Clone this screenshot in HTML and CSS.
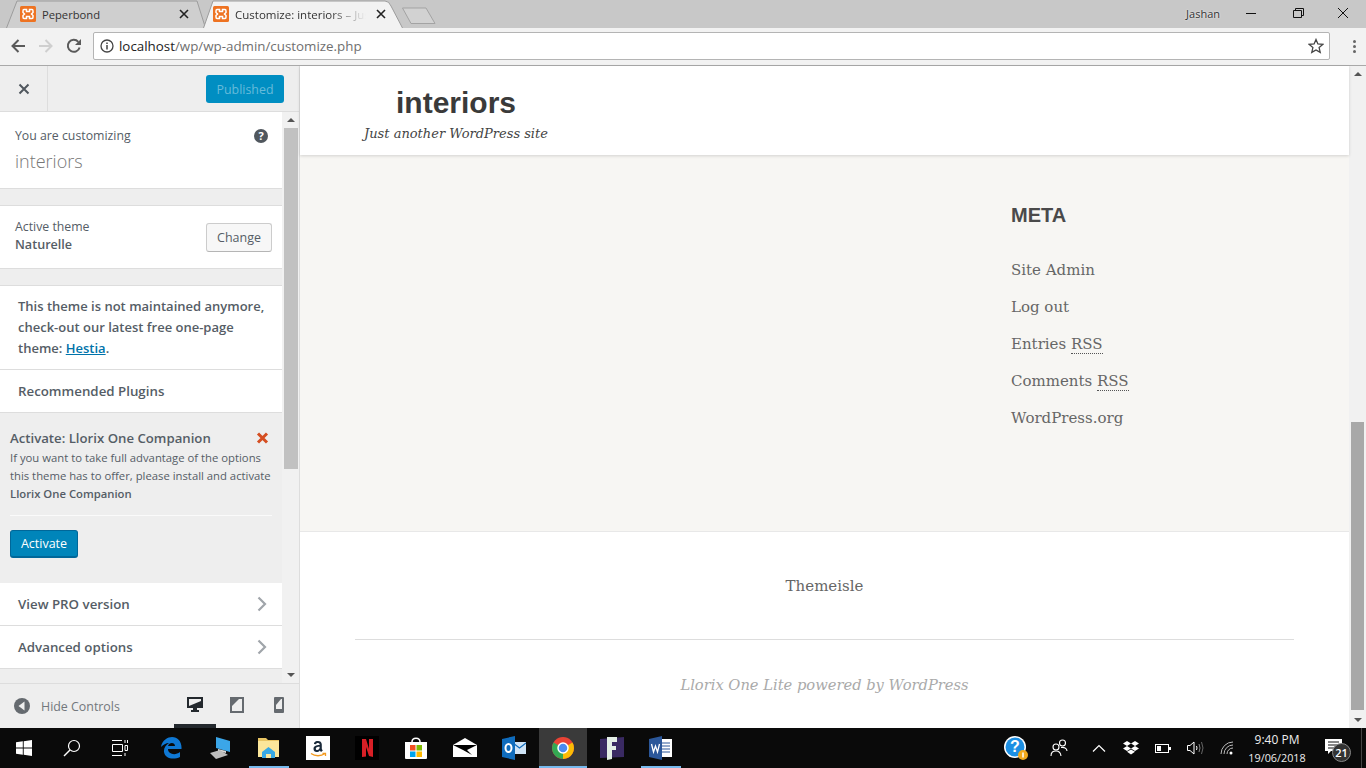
FILE: index.html
```html
<!DOCTYPE html>
<html lang="en">
<head>
    <meta charset="UTF-8">
    <title>Customize: interiors</title>
    <link rel="stylesheet" href="styles.css">
</head>
<body>
    <div class="tabstrip">
        <div class="tab">
            <svg class="tab-shape" width="200" height="28" viewBox="0 0 200 28"><path d="M0.5 28 L11 1 H191 L199.500 28" fill="#cfcfcf" stroke="#9c9c9c"/></svg>
            <svg class="favicon" width="16" height="16" viewBox="0 0 16 16"><rect width="16" height="16" rx="1.500" fill="#ee7322"/><path d="M4 3.500 H6.500 V5.500 H9.500 V3.500 H12 Q13 3.500 13 5 V6.500 L11.500 8 L13 9.500 V11 Q13 12.500 12 12.500 H9.500 V10.500 H6.500 V12.500 H4 Q3 12.500 3 11 V9.500 L4.500 8 L3 6.500 V5 Q3 3.500 4 3.500 Z" fill="none" stroke="#fff" stroke-width="1.500"/></svg>
            <span class="tab-title">Peperbond</span>
            <svg class="tab-close" width="10" height="10" viewBox="0 0 10 10"><path d="M1 1 L9 9 M9 1 L1 9" stroke="#222" stroke-width="1.600"/></svg>
        </div>
        <div class="tab tab-active">
            <svg class="tab-shape" width="200" height="28" viewBox="0 0 200 28"><path d="M0.500 28 L10 1 H182 Q186 1 188 6 L199.500 28" fill="#f2f2f2" stroke="#9c9c9c"/></svg>
            <svg class="favicon" width="16" height="16" viewBox="0 0 16 16"><rect width="16" height="16" rx="1.500" fill="#ee7322"/><path d="M4 3.500 H6.500 V5.500 H9.500 V3.500 H12 Q13 3.500 13 5 V6.500 L11.500 8 L13 9.500 V11 Q13 12.500 12 12.500 H9.500 V10.500 H6.500 V12.500 H4 Q3 12.500 3 11 V9.500 L4.500 8 L3 6.500 V5 Q3 3.500 4 3.500 Z" fill="none" stroke="#fff" stroke-width="1.500"/></svg>
            <span class="tab-title tab-fade">Customize: interiors – Jus</span>
            <svg class="tab-close" width="10" height="10" viewBox="0 0 10 10"><path d="M1 1 L9 9 M9 1 L1 9" stroke="#222" stroke-width="1.600"/></svg>
        </div>
        <svg class="newtab" width="36" height="20" viewBox="0 0 36 20"><path d="M1.500 2 H25 L34 17.500 H10 Z" fill="#d2d2d2" stroke="#a3a3a3" stroke-linejoin="round"/></svg>
        <div class="window-controls">
            <span class="user">Jashan</span>
            <svg class="win-btn" width="46" height="14" viewBox="0 0 46 14"><path d="M18 7.500 H28" stroke="#111"/></svg>
            <svg class="win-btn" width="46" height="14" viewBox="0 0 46 14"><path d="M19.500 4.500 H27.500 V11.500 H19.500 Z M21.500 4.500 V2.500 H29.500 V9.500 H27.500" fill="none" stroke="#111"/></svg>
            <svg class="win-btn" width="46" height="14" viewBox="0 0 46 14"><path d="M18 2 L28 12 M28 2 L18 12" stroke="#111"/></svg>
        </div>
    </div>

    <div class="toolbar">
        <svg class="nav-icon" width="16" height="16" viewBox="0 0 16 16"><path d="M15 8 H2.500 M8.500 2 L2.500 8 L8.500 14" fill="none" stroke="#5a5a5a" stroke-width="2"/></svg>
        <svg class="nav-icon" width="16" height="16" viewBox="0 0 16 16"><path d="M1 8 H13.500 M7.500 2 L13.500 8 L7.500 14" fill="none" stroke="#cfcfcf" stroke-width="2"/></svg>
        <svg class="nav-icon" width="16" height="16" viewBox="0 0 16 16"><path d="M13.600 9.500 A6 6 0 1 1 12.300 3.800" fill="none" stroke="#5a5a5a" stroke-width="2"/><path d="M15 1 V7 H9 Z" fill="#5a5a5a"/></svg>
        <div class="omnibox">
            <svg width="14" height="14" viewBox="0 0 14 14"><circle cx="7" cy="7" r="6" fill="none" stroke="#444" stroke-width="1.300"/><path d="M7 6 V10.500 M7 3.500 V5" stroke="#444" stroke-width="1.500"/></svg>
            <span class="url"><b>localhost</b>/wp/wp-admin/customize.php</span>
            <svg class="star" width="16" height="16" viewBox="0 0 16 16"><path d="M8 1.500 L9.900 6 L14.800 6.400 L11.100 9.600 L12.200 14.400 L8 11.900 L3.800 14.400 L4.900 9.600 L1.200 6.400 L6.100 6 Z" fill="none" stroke="#444" stroke-width="1.300"/></svg>
        </div>
        <div class="menu-dots"><i></i><i></i><i></i></div>
    </div>

    <div class="workspace">
        <aside class="sidebar">
            <div class="side-header">
                <div class="side-close">
                    <svg width="12" height="12" viewBox="0 0 12 12"><path d="M1.500 1.500 L10.500 10.500 M10.500 1.500 L1.500 10.500" stroke="#50575e" stroke-width="2"/></svg>
                </div>
                <div class="publish-btn">Published</div>
            </div>
            <div class="side-middle">
                <div class="side-scroll">
                    <section class="info-block">
                        <div class="info-top">
                            <span class="muted">You are customizing</span>
                            <span class="help">?</span>
                        </div>
                        <div class="site-name">interiors</div>
                    </section>
                    <section class="theme-block">
                        <div>
                            <div class="muted">Active theme</div>
                            <div class="theme-name">Naturelle</div>
                        </div>
                        <div class="change-btn">Change</div>
                    </section>
                    <section class="maintained">This theme is not maintained anymore, check-out our latest free one-page theme: <a href="#">Hestia</a>.</section>
                    <div class="row row-plain">Recommended Plugins</div>
                    <section class="plugin-notice">
                        <div class="plugin-head">
                            <span>Activate: Llorix One Companion</span>
                            <svg width="13" height="12" viewBox="0 0 13 12"><path d="M2 1.500 L11 10.500 M11 1.500 L2 10.500" stroke="#d54e21" stroke-width="3"/></svg>
                        </div>
                        <p class="plugin-text">If you want to take full advantage of the options this theme has to offer, please install and activate <b>Llorix One Companion</b></p>
                        <hr class="plugin-rule">
                        <div class="activate-btn">Activate</div>
                    </section>
                    <div class="row">View PRO version
                        <svg width="10" height="16" viewBox="0 0 10 16"><path d="M1.500 1.500 L8 8 L1.500 14.500" fill="none" stroke="#a0a5aa" stroke-width="2.200"/></svg>
                    </div>
                    <div class="row">Advanced options
                        <svg width="10" height="16" viewBox="0 0 10 16"><path d="M1.500 1.500 L8 8 L1.500 14.500" fill="none" stroke="#a0a5aa" stroke-width="2.200"/></svg>
                    </div>
                </div>
                <div class="side-scrollbar">
                    <span class="arrow-up"></span>
                    <div class="track"><div class="thumb"></div></div>
                    <span class="arrow-down"></span>
                </div>
            </div>
            <div class="side-footer">
                <svg width="16" height="16" viewBox="0 0 16 16"><circle cx="8" cy="8" r="8" fill="#656a6f"/><path d="M10.500 3.500 V12.500 L4.500 8 Z" fill="#eee"/></svg>
                <span class="hide-label">Hide Controls</span>
                <div class="devices">
                    <div class="device device-on">
                        <svg width="16" height="15" viewBox="0 0 16 15"><path d="M0 0 H16 V11 H10 V13 H12 V15 H4 V13 H6 V11 H0 Z" fill="#23282d"/><path d="M2 2 H14 V4 L2 9 Z" fill="#eee"/></svg>
                    </div>
                    <div class="device">
                        <svg width="14" height="16" viewBox="0 0 14 16"><rect x="1" y="1" width="12" height="14" fill="none" stroke="#656a6f" stroke-width="2"/><path d="M2 2 H9 L2 9 Z" fill="#656a6f"/></svg>
                    </div>
                    <div class="device device-last">
                        <svg width="10" height="16" viewBox="0 0 10 16"><rect width="10" height="16" rx="1" fill="#656a6f"/><path d="M2 2 H8 V12 H2 Z" fill="#eee"/><path d="M2 2 H7 L2 8 Z" fill="#656a6f"/></svg>
                    </div>
                </div>
            </div>
        </aside>

        <main class="preview">
            <div class="page">
                <header class="site-header">
                    <div class="brand">
                        <div class="site-title">interiors</div>
                        <div class="tagline">Just another WordPress site</div>
                    </div>
                </header>
                <div class="widgets">
                    <div class="meta">
                        <h3>META</h3>
                        <ul>
                            <li>Site Admin</li>
                            <li>Log out</li>
                            <li>Entries <abbr>RSS</abbr></li>
                            <li>Comments <abbr>RSS</abbr></li>
                            <li>WordPress.org</li>
                        </ul>
                    </div>
                </div>
                <footer class="site-footer">
                    <div class="footer-menu">Themeisle</div>
                    <div class="powered">Llorix One Lite powered by WordPress</div>
                </footer>
            </div>
            <div class="page-scrollbar">
                <span class="arrow-up"></span>
                <div class="track"><div class="thumb"></div></div>
                <span class="arrow-down"></span>
            </div>
        </main>
    </div>

    <div class="taskbar">
        <div class="task-group">
            <div class="task">
                <svg width="16" height="16" viewBox="0 0 16 16"><path d="M0 2.300 L6.800 1.300 V7.500 H0 Z M7.700 1.200 L16 0 V7.500 H7.700 Z M0 8.500 H6.800 V14.700 L0 13.700 Z M7.700 8.500 H16 V16 L7.700 14.800 Z" fill="#fff"/></svg>
            </div>
            <div class="task">
                <svg width="18" height="18" viewBox="0 0 18 18"><circle cx="11" cy="7" r="5.500" fill="none" stroke="#fff" stroke-width="1.200"/><path d="M7 11 L1 17" stroke="#fff" stroke-width="1.400"/></svg>
            </div>
            <div class="task">
                <svg width="16" height="16" viewBox="0 0 16 16"><path d="M0 .5 H10 M0 15.500 H10 M0.500 4.500 H10.500 V11.500 H0.500 Z M13 0 V3 M15.500 0 V3 M13 5.500 H15.500 V10.500 H13 Z M13 13 V16" fill="none" stroke="#fff"/></svg>
            </div>
        </div>
        <div class="task-group pinned">
            <div class="task">
                <svg width="22" height="22" viewBox="0 0 22 22"><path d="M1 10 C2 3 8 0 12 0 C18 0 22 5 21.500 12 H8 C8 17 15 19 20 15 V20 C14 23 5 22 4 15 C3.500 11 6 8 9 6 C6 6 3 8 1 10 Z M8 9 H15 C15 5 9 5 8 9 Z" fill="#0f78d4"/></svg>
            </div>
            <div class="task">
                <svg width="24" height="22" viewBox="0 0 24 22"><path d="M8 0 L22 4 V15 L8 11 Z" fill="#3ba6e8"/><path d="M10 12 L18 14 V16 L10 14 Z" fill="#d8d8d8"/><path d="M2 16 L12 13 L20 18 L8 22 Z" fill="#bdbdbd"/></svg>
            </div>
            <div class="task task-open">
                <svg width="22" height="20" viewBox="0 0 22 20"><path d="M0 0 H8 L10 2 H21 V19 H0 Z" fill="#e9c564"/><path d="M0 3 H21 V19 H0 Z" fill="#fbe69a"/><path d="M4 20 V14 L10.500 9 L17 14 V20 Z" fill="#38a9e4"/><path d="M8 20 V16 H13 V20 Z" fill="#fbe69a"/></svg>
            </div>
            <div class="task">
                <svg width="24" height="24" viewBox="0 0 24 24"><rect width="24" height="24" fill="#fff"/><path d="M12 5 C8.500 5 8 7 8 8 L10 8.300 C10.200 7.300 11 7 12 7 C13.500 7 13.700 8 13.700 9 C10 9 7.500 10 7.500 13 C7.500 15 9 16 10.500 16 C12 16 13 15.500 13.800 14.500 L15 16 L16.800 14.500 C16 13.500 15.800 13 15.800 12 V8.500 C15.800 6 14 5 12 5 Z M13.700 11 C13.700 13 12.500 14 11.300 14 C10.300 14 9.800 13.500 9.800 12.700 C9.800 11.300 11.300 10.800 13.700 10.800 Z" fill="#1b2a3a"/><path d="M5 17.500 C9 20.500 15 20.500 19 17.500 M16.500 17.500 H19.500 V20" fill="none" stroke="#f39a1f" stroke-width="1.300"/></svg>
            </div>
            <div class="task">
                <svg width="24" height="24" viewBox="0 0 24 24"><rect width="24" height="24" fill="#000"/><path d="M7 3 H11 L14 13 V3 H18 V21 L14 20 L11 11 V20.500 L7 21 Z" fill="#d81f26"/></svg>
            </div>
            <div class="task">
                <svg width="24" height="24" viewBox="0 0 24 24"><path d="M8 6 C8 1 16 1 16 6" fill="none" stroke="#fff" stroke-width="1.500"/><path d="M1 6 H23 V22 Q23 23 22 23 H2 Q1 23 1 22 Z" fill="#fff"/><rect x="6" y="9" width="5.500" height="5.500" fill="#f25022"/><rect x="12.500" y="9" width="5.500" height="5.500" fill="#7fba00"/><rect x="6" y="15.500" width="5.500" height="5.500" fill="#00a4ef"/><rect x="12.500" y="15.500" width="5.500" height="5.500" fill="#ffb900"/></svg>
            </div>
            <div class="task">
                <svg width="24" height="20" viewBox="0 0 24 20"><path d="M0 7 L12 0 L24 7 V19 H0 Z" fill="#fff"/><path d="M0 7 H24 L14 12 L19 17 L10 12 Z" fill="#000"/></svg>
            </div>
            <div class="task">
                <svg width="24" height="24" viewBox="0 0 24 24"><path d="M11 6 H24 V18 H11 Z" fill="#cfe4f7"/><path d="M11 7 L17.500 12 L24 7" fill="none" stroke="#0f6cbd" stroke-width="1.200"/><path d="M0 3 L13 0 V24 L0 21 Z" fill="#0f6cbd"/><ellipse cx="6.500" cy="12" rx="3" ry="4" fill="none" stroke="#fff" stroke-width="2"/></svg>
            </div>
            <div class="task task-active">
                <svg width="22" height="22" viewBox="0 0 22 22"><circle cx="11" cy="11" r="11" fill="#ea4335"/><path d="M11 11 L1.500 5.500 A11 11 0 0 0 11 22 Z" fill="#34a853"/><path d="M11 11 L11 22 A11 11 0 0 0 20.500 5.500 Z" fill="#fbbc05"/><circle cx="11" cy="11" r="5" fill="#4a8bf0" stroke="#fff" stroke-width="1.500"/></svg>
            </div>
            <div class="task">
                <svg width="24" height="24" viewBox="0 0 24 24"><path d="M0 3 L24 1 V21 L0 22 Z" fill="#3a2a63"/><path d="M7 1 H17 V6 H12 V10 H16 V14 H12 V23 L7 24 Z" fill="#e4efe6"/></svg>
            </div>
            <div class="task task-open">
                <svg width="24" height="24" viewBox="0 0 24 24"><path d="M11 3 H23 V21 H11 Z" fill="#fff"/><path d="M13 7 H21 M13 10 H21 M13 13 H21 M13 16 H21" stroke="#2b579a"/><path d="M0 3 L13 0 V24 L0 21 Z" fill="#2b579a"/><path d="M2.500 8 L4.500 16 L6.500 10 L8.500 16 L10.500 8" fill="none" stroke="#fff" stroke-width="1.300"/></svg>
            </div>
        </div>
        <div class="tray">
            <div class="tray-help">
                <svg width="26" height="26" viewBox="0 0 26 26"><circle cx="12" cy="12" r="11" fill="#fff"/><circle cx="12" cy="12" r="9.500" fill="#1c8fe3"/><text x="12" y="17" text-anchor="middle" class="help-glyph">?</text><circle cx="20" cy="20" r="5" fill="#f0a91e"/><path d="M20 17.500 V22.500" stroke="#fff" stroke-width="1.500"/></svg>
            </div>
            <div class="tray-people">
                <svg width="18" height="18" viewBox="0 0 18 18"><circle cx="6" cy="8" r="3" fill="none" stroke="#fff" stroke-width="1.100"/><path d="M1 17 C1 13 3 12 6 12 C9 12 10.500 13 11 17" fill="none" stroke="#fff" stroke-width="1.100"/><circle cx="12.500" cy="4" r="3" fill="none" stroke="#fff" stroke-width="1.100"/><path d="M11 8.500 C14 8 17 9 17 12" fill="none" stroke="#fff" stroke-width="1.100"/></svg>
            </div>
            <div class="tray-icon">
                <svg width="14" height="8" viewBox="0 0 14 8"><path d="M1 7.500 L7 1.500 L13 7.500" fill="none" stroke="#fff" stroke-width="1.200"/></svg>
            </div>
            <div class="tray-icon">
                <svg width="16" height="14" viewBox="0 0 16 14"><path d="M4 0 L8 2.500 L4 5 L0 2.500 Z M12 0 L16 2.500 L12 5 L8 2.500 Z M4 5 L8 7.500 L4 10 L0 7.500 Z M12 5 L16 7.500 L12 10 L8 7.500 Z M4 10.800 L8 8.500 L12 10.800 L8 13.500 Z" fill="#fff"/></svg>
            </div>
            <div class="tray-icon">
                <svg width="16" height="9" viewBox="0 0 16 9"><rect x=".5" y=".5" width="13" height="8" fill="none" stroke="#fff"/><rect x="2" y="2" width="4" height="5" fill="#fff"/><rect x="14" y="3" width="2" height="3" fill="#fff"/></svg>
            </div>
            <div class="tray-icon">
                <svg width="17" height="14" viewBox="0 0 17 14"><path d="M.5 4.500 H3 L7 1 V13 L3 9.500 H.5 Z" fill="none" stroke="#fff"/><path d="M9.500 5 Q10.500 7 9.500 9" fill="none" stroke="#fff"/><path d="M12 3 Q14 7 12 11" fill="none" stroke="#888"/><path d="M14.500 1 Q17.500 7 14.500 13" fill="none" stroke="#666"/></svg>
            </div>
            <div class="tray-icon">
                <svg width="14" height="14" viewBox="0 0 14 14"><path d="M1 13 A12 12 0 0 1 13 1 M4 13 A9 9 0 0 1 13 4 M7 13 A6 6 0 0 1 13 7" fill="none" stroke="#bbb"/><circle cx="11" cy="12" r="1.500" fill="#fff"/></svg>
            </div>
            <div class="clock">
                <div>9:40 PM</div>
                <div class="clock-date">19/06/2018</div>
            </div>
            <div class="notify">
                <svg width="17" height="15" viewBox="0 0 17 15"><path d="M0 0 H17 V12 H6 L3 15 V12 H0 Z" fill="#fff"/><path d="M3 3 H14 M3 6 H14 M3 9 H14" stroke="#111"/></svg>
                <span class="notify-count">21</span>
            </div>
            <div class="show-desktop"></div>
        </div>
    </div>
</body>
</html>
```

FILE: styles.css
```css
* {
    box-sizing: border-box;
}
html, body {
    height: 100%;
}
body {
    margin: 0;
    width: 1366px;
    height: 768px;
    overflow: hidden;
    display: flex;
    flex-direction: column;
    font-family: "Open Sans", "Noto Sans", sans-serif;
    background: #fff;
}

/* browser chrome */
.tabstrip {
    height: 28px;
    flex: none;
    display: flex;
    padding-left: 6px;
    background: #c8c8c8;
    font-size: 12px;
}
.tab {
    position: relative;
    width: 200px;
    height: 28px;
    margin-right: -3px;
    padding: 0 17px 0 14px;
    display: flex;
    align-items: center;
    gap: 6px;
    color: #333;
}
.tab-active {
    padding-left: 10px;
}
.tab-shape {
    position: absolute;
    left: 0;
    top: 0;
}
.tab .favicon, .tab-title, .tab-close {
    position: relative;
}
.tab-title {
    flex: 1;
    white-space: nowrap;
    font-size: 11.200px;
}
.tab-fade {
    font-size: 11.500px;
    -webkit-mask-image: linear-gradient(90deg, #000 70%, transparent 97%);
    mask-image: linear-gradient(90deg, #000 70%, transparent 97%);
}
.newtab {
    margin: 6px 0 0 1px;
}
.window-controls {
    margin-left: auto;
    display: flex;
    align-items: center;
    padding-bottom: 2px;
}
.user {
    margin-right: 8px;
    font-size: 11px;
    color: #333;
    text-shadow: 0 0 2px #fff;
}
.toolbar {
    height: 38px;
    flex: none;
    display: flex;
    align-items: center;
    padding: 0 9px 1px 10px;
    background: #f2f2f2;
    border-bottom: 1px solid #a9a9a9;
}
.nav-icon {
    margin-right: 12px;
    flex: none;
}
.nav-icon:nth-child(3) {
    margin-right: 11px;
}
.omnibox {
    flex: 1;
    height: 28px;
    display: flex;
    align-items: center;
    gap: 5px;
    padding: 0 5px 0 6px;
    background: #fff;
    border: 1px solid #b4b4b4;
    border-radius: 2px;
}
.url {
    flex: 1;
    font-size: 13.350px;
    color: #6f6f6f;
}
.url b {
    font-weight: 400;
    color: #222;
}
.menu-dots {
    width: 27px;
    display: flex;
    flex-direction: column;
    align-items: flex-end;
    gap: 2px;
    padding-right: 1px;
}
.menu-dots i {
    width: 3px;
    height: 3px;
    background: #666;
    border-radius: 50%;
}

.workspace {
    flex: 1;
    display: flex;
    min-height: 0;
}

/* customizer panel */
.sidebar {
    width: 300px;
    flex: none;
    display: flex;
    flex-direction: column;
    background: #eee;
    border-right: 1px solid #ddd;
    color: #555d66;
}
.side-header {
    height: 46px;
    flex: none;
    display: flex;
    align-items: flex-start;
    justify-content: space-between;
    padding-right: 15px;
    border-bottom: 1px solid #ddd;
}
.side-close {
    width: 48px;
    height: 45px;
    display: flex;
    align-items: center;
    justify-content: center;
    border-right: 1px solid #ddd;
}
.publish-btn {
    width: 78px;
    height: 28px;
    margin-top: 9px;
    display: flex;
    align-items: center;
    justify-content: center;
    background: #008ec2;
    border-radius: 3px;
    font-size: 12.400px;
    color: #66bbda;
}
.side-middle {
    flex: 1;
    display: flex;
    min-height: 0;
}
.side-scroll {
    width: 282px;
    flex: none;
    overflow: hidden;
    font-size: 13px;
}
.info-block {
    height: 77px;
    padding: 15px 15px 0;
    background: #fff;
    border-bottom: 1px solid #ddd;
}
.info-top {
    display: flex;
    justify-content: space-between;
    align-items: center;
}
.muted {
    font-size: 12.300px;
    color: #555d66;
}
.help {
    width: 14px;
    height: 14px;
    margin-right: -1px;
    display: flex;
    align-items: center;
    justify-content: center;
    border-radius: 50%;
    background: #50575e;
    color: #fff;
    font-size: 11px;
    font-weight: 700;
}
.site-name {
    margin-top: 5px;
    font-size: 18px;
    font-weight: 300;
    color: #777;
}
.theme-block {
    height: 64px;
    margin-top: 16px;
    padding: 0 10px 4px 15px;
    display: flex;
    align-items: center;
    justify-content: space-between;
    background: #fff;
    border-top: 1px solid #ddd;
    border-bottom: 1px solid #ddd;
}
.theme-name {
    margin-top: 1px;
    font-size: 12.600px;
    font-weight: 600;
}
.change-btn {
    width: 66px;
    height: 29px;
    margin-bottom: -4px;
    display: flex;
    align-items: center;
    justify-content: center;
    background: #f7f7f7;
    border: 1px solid #ccc;
    border-bottom-color: #b5b5b5;
    border-radius: 3px;
    font-size: 12.500px;
}
.maintained {
    height: 85px;
    margin-top: 16px;
    padding: 10px 15px 0 18px;
    background: #fff;
    border-top: 1px solid #ddd;
    border-bottom: 1px solid #ddd;
    font-size: 13px;
    font-weight: 600;
    line-height: 21px;
}
.maintained a {
    color: #0073aa;
}
.row {
    height: 43px;
    padding: 0 15px 0 18px;
    display: flex;
    align-items: center;
    justify-content: space-between;
    background: #fff;
    border-bottom: 1px solid #ddd;
    font-size: 13.300px;
    font-weight: 600;
}
.plugin-notice {
    height: 170px;
    padding: 16px 10px 0;
    background: #eee;
}
.plugin-head {
    display: flex;
    justify-content: space-between;
    align-items: center;
    padding-right: 3px;
    font-size: 13.200px;
    font-weight: 600;
}
.plugin-text {
    margin: 2px 0 0;
    font-size: 11.300px;
    line-height: 18px;
}
.plugin-text b {
    font-weight: 600;
}
.plugin-rule {
    margin: 12px 0 14px;
    border: 0;
    border-top: 1px solid #fafafa;
}
.activate-btn {
    width: 68px;
    height: 28px;
    display: flex;
    align-items: center;
    justify-content: center;
    background: #0085ba;
    border: 1px solid #006799;
    border-bottom-width: 2px;
    border-radius: 3px;
    color: #fff;
    font-size: 12.500px;
}
.side-scrollbar {
    width: 17px;
    display: flex;
    flex-direction: column;
    align-items: center;
    background: #f1f1f1;
}
.side-scrollbar .track {
    flex: 1;
    width: 100%;
    padding: 0 1px 0 2px;
}
.side-scrollbar .thumb {
    height: 341px;
    background: #c1c1c1;
}
.arrow-up, .arrow-down {
    width: 0;
    height: 0;
    flex: none;
    margin: 6px 0;
    border-left: 4px solid transparent;
    border-right: 4px solid transparent;
}
.arrow-up {
    border-bottom: 4px solid #555;
}
.arrow-down {
    border-top: 4px solid #555;
}
.side-footer {
    height: 45px;
    flex: none;
    display: flex;
    align-items: center;
    padding: 0 0 0 14px;
    border-top: 1px solid #ddd;
}
.hide-label {
    margin-left: 11px;
    font-size: 12.400px;
    color: #72777c;
}
.devices {
    margin-left: auto;
    display: flex;
}
.device {
    width: 42px;
    height: 44px;
    display: flex;
    align-items: center;
    justify-content: center;
    padding-bottom: 3px;
}
.device-last {
    width: 41px;
}
.device-on {
    border-bottom: 4px solid #23282d;
    padding-bottom: 0;
}

/* previewed site */
.preview {
    flex: 1;
    display: flex;
    min-width: 0;
}
.page {
    flex: 1;
    display: flex;
    flex-direction: column;
    min-width: 0;
    background: #fff;
}
.site-header {
    height: 89px;
    flex: none;
    position: relative;
    padding: 19px 0 0 64px;
    box-shadow: 0 1px 3px rgba(0, 0, 0, .15);
}
.brand {
    width: 184px;
    text-align: center;
}
.site-title {
    font-family: "Liberation Sans", Arial, sans-serif;
    font-size: 30px;
    line-height: 36px;
    font-weight: 700;
    color: #3a3a3a;
}
.tagline {
    margin-top: 5px;
    font-family: "DejaVu Serif", serif;
    font-size: 13px;
    font-style: italic;
    white-space: nowrap;
    color: #444;
}
.widgets {
    height: 377px;
    flex: none;
    padding: 46px 0 0 711px;
    background: #f7f6f3;
    border-bottom: 1px solid #e8e8e8;
}
.meta h3 {
    margin: 0 0 23px;
    font-family: "Liberation Sans", Arial, sans-serif;
    font-size: 20px;
    line-height: 28px;
    font-weight: 700;
    color: #4a4a4a;
}
.meta ul {
    margin: 0;
    padding: 0;
    list-style: none;
    font-family: "DejaVu Serif", serif;
    font-size: 15px;
    line-height: 37px;
    color: #666;
}
abbr {
    border-bottom: 1px dotted #555;
}
.site-footer {
    flex: 1;
    margin: 0 55px;
    text-align: center;
    font-family: "DejaVu Serif", serif;
}
.footer-menu {
    height: 108px;
    padding-top: 45px;
    border-bottom: 1px solid #ddd;
    font-size: 15px;
    color: #666;
}
.powered {
    margin-top: 36px;
    font-size: 14.700px;
    font-style: italic;
    color: #aaa;
}
.page-scrollbar {
    width: 17px;
    flex: none;
    display: flex;
    flex-direction: column;
    align-items: center;
    background: #f1f1f1;
}
.page-scrollbar .track {
    flex: 1;
    width: 100%;
    padding: 340px 2px 0;
}
.page-scrollbar .thumb {
    height: 288px;
    background: #a8a8a8;
}

/* windows taskbar */
.taskbar {
    height: 40px;
    flex: none;
    display: flex;
    background: #0a0a0a;
    color: #fff;
}
.task-group {
    display: flex;
}
.pinned {
    margin-left: 3px;
}
.task {
    width: 48px;
    height: 40px;
    display: flex;
    align-items: center;
    justify-content: center;
    position: relative;
}
.pinned .task {
    margin-right: 1px;
}
.task-open::after {
    content: "";
    position: absolute;
    left: 4px;
    right: 4px;
    bottom: 0;
    height: 2px;
    background: #76b9ed;
}
.task-active {
    background: #3a3a3a;
    border-bottom: 2px solid #76b9ed;
    padding-top: 2px;
}
.tray {
    margin-left: auto;
    display: flex;
    align-items: center;
    height: 40px;
}
.tray-help {
    width: 40px;
    margin-right: 3px;
    display: flex;
    justify-content: center;
}
.tray-people {
    width: 40px;
    margin-right: 4px;
    display: flex;
    justify-content: center;
}
.tray-icon {
    width: 32px;
    display: flex;
    justify-content: center;
}
.clock {
    width: 68px;
    padding-top: 2px;
    text-align: center;
    font-size: 12px;
    line-height: 18px;
    white-space: nowrap;
    color: #eee;
}
.clock-date {
    font-size: 10.800px;
}
.notify {
    width: 50px;
    height: 40px;
    position: relative;
    padding: 11px 0 0 14px;
}
.notify svg {
    display: block;
}
.notify-count {
    position: absolute;
    left: 21px;
    top: 15px;
    width: 19px;
    height: 19px;
    display: flex;
    align-items: center;
    justify-content: center;
    background: #333;
    border: 1px solid #888;
    border-radius: 50%;
    font-size: 11px;
    font-weight: 600;
}
.show-desktop {
    width: 5px;
    height: 40px;
    border-left: 1px solid #444;
}
.help-glyph {
    font-family: "Liberation Sans", sans-serif;
    font-size: 16px;
    font-weight: 700;
    fill: #fff;
}
```
